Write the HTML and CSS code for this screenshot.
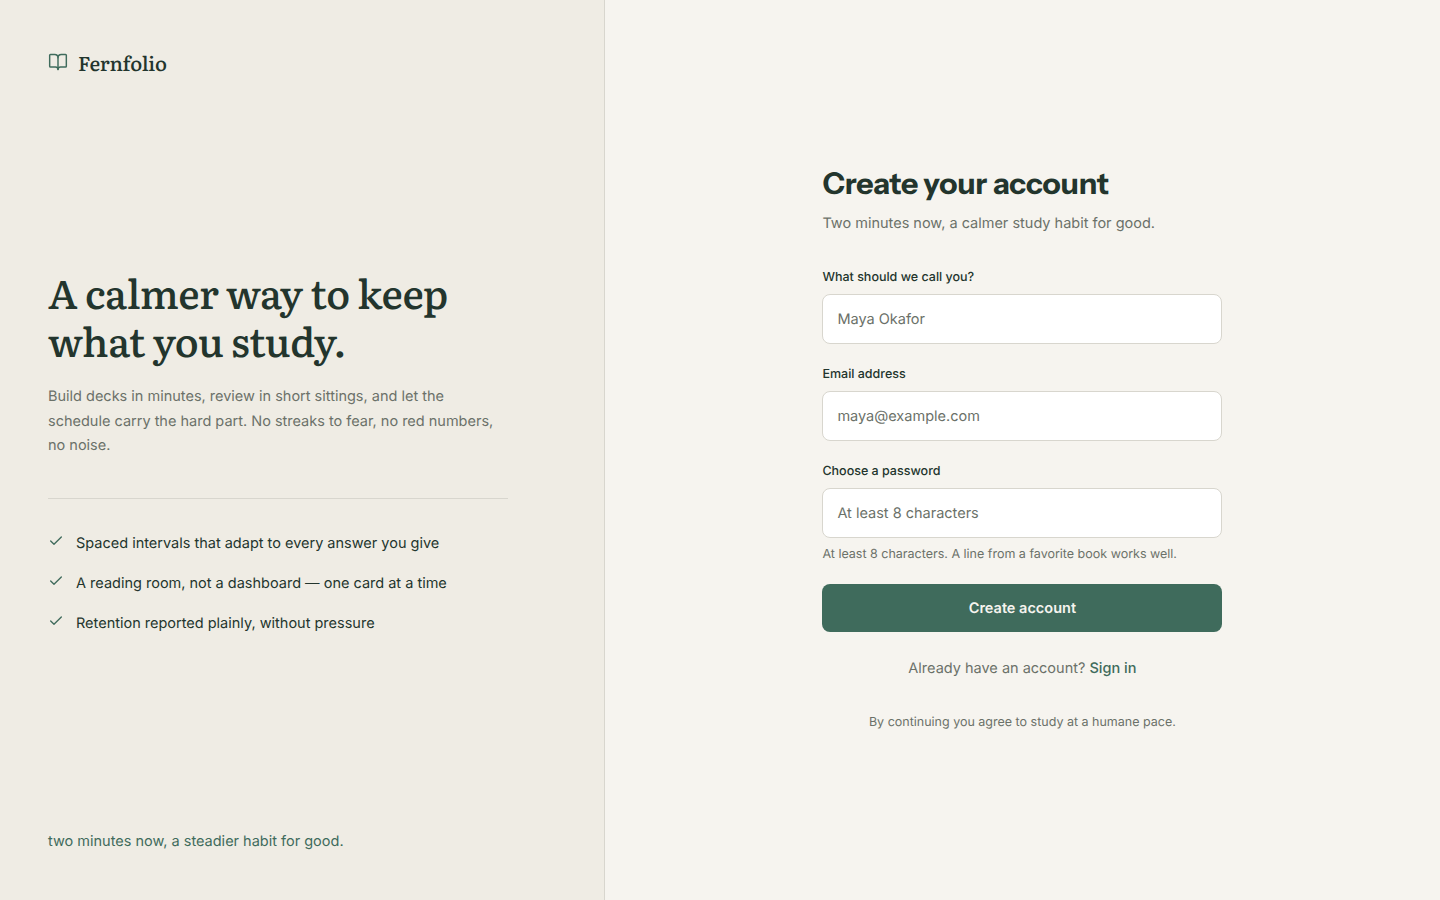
FILE: index.html
```html
<!DOCTYPE html>
<html lang="en">
<head>
<meta charset="utf-8">
<title>Fernfolio — Create your account</title>
<link rel="stylesheet" href="styles.css">
</head>
<body>
<div class="page">
  <aside class="aside">
    <div class="brand">
      <svg class="brand-icon" width="20" height="20" viewBox="0 0 24 24" fill="none" stroke="currentColor" stroke-width="1.75" stroke-linecap="round" stroke-linejoin="round"><path d="M12 7v14"/><path d="M3 18a1 1 0 0 1-1-1V4a1 1 0 0 1 1-1h5a4 4 0 0 1 4 4 4 4 0 0 1 4-4h5a1 1 0 0 1 1 1v13a1 1 0 0 1-1 1h-6a3 3 0 0 0-3 3 3 3 0 0 0-3-3z"/></svg>
      <span class="brand-name">Fernfolio</span>
    </div>
    <div class="pitch">
      <h1 class="headline">A calmer way to keep what you study.</h1>
      <p class="lede">Build decks in minutes, review in short sittings, and let the schedule carry the hard part. No streaks to fear, no red numbers, no noise.</p>
      <ul class="points">
        <li class="point"><svg class="check" width="16" height="16" viewBox="0 0 24 24" fill="none" stroke="currentColor" stroke-width="2" stroke-linecap="round" stroke-linejoin="round"><path d="M20 6 9 17l-5-5"/></svg><span>Spaced intervals that adapt to every answer you give</span></li>
        <li class="point"><svg class="check" width="16" height="16" viewBox="0 0 24 24" fill="none" stroke="currentColor" stroke-width="2" stroke-linecap="round" stroke-linejoin="round"><path d="M20 6 9 17l-5-5"/></svg><span>A reading room, not a dashboard — one card at a time</span></li>
        <li class="point"><svg class="check" width="16" height="16" viewBox="0 0 24 24" fill="none" stroke="currentColor" stroke-width="2" stroke-linecap="round" stroke-linejoin="round"><path d="M20 6 9 17l-5-5"/></svg><span>Retention reported plainly, without pressure</span></li>
      </ul>
    </div>
    <p class="tagline">two minutes now, a steadier habit for good.</p>
  </aside>
  <main class="main">
    <form class="form">
      <h2 class="title">Create your account</h2>
      <p class="sub">Two minutes now, a calmer study habit for good.</p>
      <div class="field">
        <label class="label" for="n">What should we call you?</label>
        <input class="input" id="n" type="text" placeholder="Maya Okafor">
      </div>
      <div class="field">
        <label class="label" for="e">Email address</label>
        <input class="input" id="e" type="email" placeholder="maya@example.com">
      </div>
      <div class="field">
        <label class="label" for="p">Choose a password</label>
        <input class="input" id="p" type="password" placeholder="At least 8 characters">
        <p class="hint">At least 8 characters. A line from a favorite book works well.</p>
      </div>
      <button class="submit" type="button">Create account</button>
      <p class="signin">Already have an account? <a class="link" href="#">Sign in</a></p>
      <p class="legal">By continuing you agree to study at a humane pace.</p>
    </form>
  </main>
</div>
</body>
</html>
```
FILE: styles.css
```css
* { box-sizing: border-box; text-rendering: geometricPrecision; }
html, body { margin: 0; height: 100%; }
body { font-family: Inter, "Noto Sans", sans-serif; background: #f6f4ef; color: #23352d; }
.page { display: flex; height: 100vh; overflow: hidden; }
.aside { width: 42%; flex: none; background: #efece4; border-right: 1px solid #d8d6ce; padding: 48px 48px 46px; display: flex; flex-direction: column; justify-content: space-between; }
.brand { display: flex; align-items: center; gap: 10px; height: 30px; color: #23352d; }
.brand-icon { color: #3f6b5c; margin-top: -2px; }
.brand-name { font-family: Literata, "Liberation Serif", serif; font-size: 20px; font-weight: 500; letter-spacing: -0.2px; }
.pitch { width: 460px; margin-bottom: 2px; }
.headline { margin: 0; font-family: Literata, "Liberation Serif", serif; font-size: 40px; line-height: 48px; font-weight: 500; letter-spacing: -0.4px; color: #23352d; }
.lede { margin: 20px 0 0; font-size: 14.5px; line-height: 24.65px; color: #6b7169; padding-bottom: 39px; border-bottom: 1px solid #d8d6ce; }
.points { list-style: none; margin: 33px 0 0; padding: 0 0 1px; display: flex; flex-direction: column; gap: 16px; }
.point { display: flex; gap: 12px; font-size: 14.5px; line-height: 24px; color: #23352d; }
.check { color: #3f6b5c; flex: none; margin-top: 1px; }
.tagline { margin: 0; font-size: 14.5px; line-height: 24px; color: #3f6b5c; }
.main { flex: 1; display: flex; justify-content: center; align-items: center; }
.form { width: 400px; }
.title { margin: 0; font-family: "Instrument Sans", Inter, sans-serif; font-size: 30px; line-height: 34px; font-weight: 700; letter-spacing: -0.15px; color: #23352d; }
.sub { margin: 11px 0 0; font-size: 14.5px; line-height: 24px; color: #6b7169; }
.field { margin-top: 20px; }
.sub + .field { margin-top: 31px; }
.label { display: block; font-size: 12.5px; line-height: 21px; font-weight: 500; color: #23352d; margin-bottom: 6px; }
.input { display: block; width: 100%; height: 50px; padding: 2px 14px 0; border: 1px solid #d8d6ce; border-radius: 8px; background: #fff; font: 14.5px Inter, sans-serif; color: #23352d; }
.input::placeholder { color: #6b7169; opacity: 1; }
.hint { margin: 7px 0 0; font-size: 12.5px; line-height: 19px; color: #6b7169; }
.submit { display: block; width: 100%; height: 48px; margin-top: 20px; padding: 2px 0 0; border: 0; border-radius: 8px; background: #3f6b5c; color: #f6f4ef; font: 600 14.5px Inter, sans-serif; }
.signin { margin: 25px 0 0; text-align: center; font-size: 14.5px; line-height: 24px; color: #6b7169; }
.link { color: #3f6b5c; font-weight: 500; text-decoration: none; }
.legal { margin: 31px 0 0; text-align: center; font-size: 12.5px; line-height: 22px; color: #6b7169; }
```
